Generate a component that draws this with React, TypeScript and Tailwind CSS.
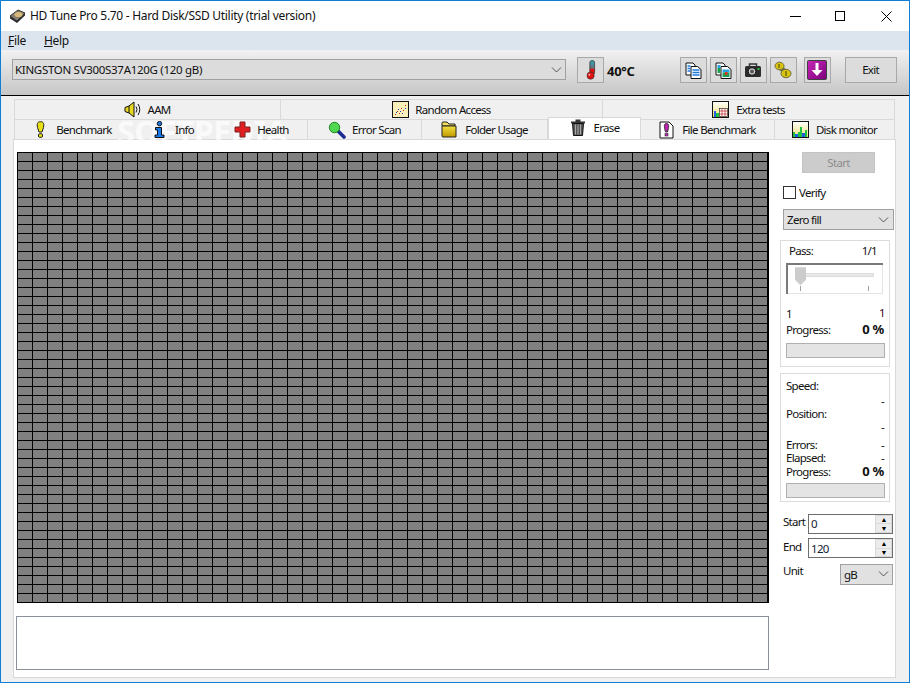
const font = "font-['Noto_Sans',sans-serif]";

function Chevron({ className = '' }: { className?: string }) {
  return (
    <svg className={className} width="11" height="6" viewBox="0 0 11 6" fill="none">
      <path d="M1 0.5 L5.5 5 L10 0.5" stroke="#555" strokeWidth="1" />
    </svg>
  );
}

function DiskLogo() {
  return (
    <svg width="17" height="15" viewBox="0 0 17 15">
      <path d="M1 7 L9 1 L16 4 L8 12 Z" fill="#857d70" stroke="#333" />
      <path d="M1 7 L1 9.5 L8 14 L16 6.5 L16 4 L8 12 Z" fill="#2e2e2e" />
      <ellipse cx="9.5" cy="5.5" rx="4" ry="2.6" fill="#d8b878" />
    </svg>
  );
}

function ThermoIcon() {
  return (
    <svg width="12" height="20" viewBox="0 0 14 25">
      <defs>
        <linearGradient id="tube" x1="0" y1="0" x2="0" y2="1">
          <stop offset="0" stopColor="#2fa8b8" />
          <stop offset="0.55" stopColor="#6a7074" />
          <stop offset="0.6" stopColor="#e01010" />
        </linearGradient>
      </defs>
      <rect x="5.5" y="0.5" width="6" height="18" rx="3" fill="url(#tube)" stroke="#222" strokeWidth="0.8" />
      <circle cx="6.5" cy="19.5" r="4.5" fill="#e01010" stroke="#333" strokeWidth="0.8" />
      <circle cx="5" cy="18.5" r="1.2" fill="#f8b0b0" />
    </svg>
  );
}

function DocsIcon({ variant }: { variant: 'text' | 'image' }) {
  return (
    <svg width="17" height="17" viewBox="0 0 17 17">
      <path d="M1 1 H8 L10 3 V13 H1 Z" fill="#fff" stroke="#111" />
      <path d="M6 4.5 H12.5 L16 7.5 V16.5 H6 Z" fill="#fff" stroke="#111" />
      {variant === 'text' ? (
        <path d="M2.5 4 H5.5 M2.5 6.5 H5.5 M2.5 9 H5.5 M7.5 8 H14.5 M7.5 10.5 H14.5 M7.5 13 H14.5" stroke="#1e78e0" strokeWidth="1.3" />
      ) : (
        <g>
          <rect x="2.5" y="3" width="3" height="3" fill="#29a0e0" />
          <rect x="2.5" y="6" width="3" height="5" fill="#1aa050" />
          <rect x="7.5" y="7.5" width="7" height="3" fill="#29a0e0" />
          <rect x="7.5" y="10.5" width="7" height="4.5" fill="#1aa050" />
          <rect x="10" y="10" width="2.5" height="3" fill="#e03020" />
        </g>
      )}
    </svg>
  );
}

function CameraIcon() {
  return (
    <svg width="18" height="15" viewBox="0 0 18 15">
      <path d="M5.5 3 V1 H12.5 V3" fill="none" stroke="#333" strokeWidth="1.5" />
      <rect x="1" y="3" width="16" height="11" rx="1.5" fill="#2c2c2c" />
      <circle cx="8" cy="8.5" r="3.8" fill="#d4d4d4" stroke="#111" />
      <circle cx="8" cy="8.5" r="2" fill="#555" />
      <rect x="13.5" y="5" width="2" height="2" fill="#20c040" />
    </svg>
  );
}

function CoinsIcon() {
  return (
    <svg width="18" height="18" viewBox="0 0 18 18">
      <path d="M6 6 L12 12" stroke="#6e6a40" strokeWidth="5" />
      <ellipse cx="5.5" cy="5" rx="4.5" ry="3.8" fill="#d8c410" stroke="#6e6a40" />
      <ellipse cx="12" cy="12.5" rx="5" ry="4.2" fill="#d8c410" stroke="#6e6a40" />
      <path d="M5 3 V7 M12 10 V15" stroke="#6b5e00" strokeWidth="1.3" />
    </svg>
  );
}

function DownloadIcon() {
  return (
    <svg width="20" height="20" viewBox="0 0 20 20">
      <defs>
        <linearGradient id="dl" x1="0" y1="0" x2="1" y2="1">
          <stop offset="0" stopColor="#c828b8" />
          <stop offset="1" stopColor="#7c007c" />
        </linearGradient>
      </defs>
      <rect x="0.5" y="0.5" width="19" height="19" rx="1" fill="url(#dl)" stroke="#404040" />
      <path d="M8.5 3 H11.5 V10 H15.5 L10 16 L4.5 10 H8.5 Z" fill="#fff" />
    </svg>
  );
}

function BulbIcon() {
  return (
    <svg width="11" height="17" viewBox="0 0 11 17">
      <path d="M5.5 0.7 C2 0.7 1.5 3.5 3 8 L4 11 H7 L8 8 C9.5 3.5 9 0.7 5.5 0.7 Z" fill="#e8e010" stroke="#222" />
      <rect x="3.5" y="12.7" width="4" height="3.6" rx="1.2" fill="#e8e010" stroke="#222" />
    </svg>
  );
}

function InfoIcon() {
  return (
    <svg width="11" height="17" viewBox="0 0 11 17">
      <circle cx="5.5" cy="2.6" r="2.2" fill="#1878e8" stroke="#111" />
      <path d="M1.5 6.5 H7.5 V14 H10 V16.5 H1 V14 H3.5 V9 H1.5 Z" fill="#1878e8" stroke="#111" />
    </svg>
  );
}

function CrossIcon() {
  return (
    <svg width="17" height="17" viewBox="0 0 17 17">
      <path d="M6 1 H11 V6 H16 V11 H11 V16 H6 V11 H1 V6 H6 Z" fill="#e02020" stroke="#7a2020" />
    </svg>
  );
}

function MagnifierIcon() {
  return (
    <svg width="18" height="18" viewBox="0 0 18 18">
      <path d="M9 9 L16 16" stroke="#1c2c90" strokeWidth="3.6" strokeLinecap="round" />
      <circle cx="6.5" cy="6.5" r="5.2" fill="#50d850" stroke="#208020" />
    </svg>
  );
}

function FolderIcon() {
  return (
    <svg width="16" height="17" viewBox="0 0 16 17">
      <defs>
        <linearGradient id="fold" x1="0" y1="0" x2="0" y2="1">
          <stop offset="0" stopColor="#f4e040" />
          <stop offset="1" stopColor="#c09800" />
        </linearGradient>
      </defs>
      <path d="M1 2 Q1 1 2 1 H6 L8 3 H14 V5 H1 Z" fill="#f0dc60" stroke="#222" />
      <path d="M1 5 H15 V16 H2 Q1 16 1 15 Z" fill="url(#fold)" stroke="#222" />
    </svg>
  );
}

function TrashIcon() {
  return (
    <svg width="16" height="17" viewBox="0 0 16 17">
      <path d="M1 2.5 H15 V4.5 H1 Z M5.5 0.5 H10.5 V2.5 H5.5 Z" fill="#333" />
      <path d="M2.5 4.5 H13.5 L12.5 16.5 H3.5 Z" fill="#555" stroke="#111" />
      <path d="M5.5 5.5 V15.5 M8 5.5 V15.5 M10.5 5.5 V15.5" stroke="#aaa" strokeWidth="1" />
    </svg>
  );
}

function AlertDocIcon() {
  return (
    <svg width="15" height="18" viewBox="0 0 15 18">
      <path d="M1 1 H10 L14 5 V17 H1 Z" fill="#fff" stroke="#111" />
      <path d="M7.5 2.5 C5 2.5 5 5 6 9 L6.5 11 H8.5 L9 9 C10 5 10 2.5 7.5 2.5 Z" fill="#c020b0" stroke="#333" />
      <rect x="6" y="12.5" width="3" height="2.5" fill="#c020b0" stroke="#333" strokeWidth="0.6" />
    </svg>
  );
}

function ChartIcon({ grid = false }: { grid?: boolean }) {
  const id = grid ? 'cg1' : 'cg2';
  return (
    <svg width="17" height="17" viewBox="0 0 17 17">
      <defs>
        <linearGradient id={id} x1="0" y1="0" x2="0" y2="1">
          <stop offset="0" stopColor="#fff" />
          <stop offset="1" stopColor="#f0e070" />
        </linearGradient>
      </defs>
      <rect x="0.5" y="0.5" width="16" height="16" fill={`url(#${id})`} stroke="#111" />
      {grid ? (
        <g>
          <rect x="2" y="10" width="2" height="6" fill="#2060e0" />
          <rect x="4" y="12" width="3" height="4" fill="#20c040" />
          <rect x="7.5" y="7.5" width="8" height="8" fill="#fff" stroke="#333" strokeWidth="0.7" />
          <path d="M7.5 10 H15.5 M7.5 13 H15.5 M10 7.5 V15.5 M13 7.5 V15.5" stroke="#c02020" strokeWidth="0.7" />
        </g>
      ) : (
        <g>
          <path d="M1 16 V11 H3 V16 Z M6 16 V11 H8 V16 Z M8 16 V6 H10 V16 Z M13 16 V9 H15 V16 Z" fill="#20c040" />
          <path d="M3 16 V13 H6 V16 Z M10 16 V12 H13 V16 Z" fill="#2060e0" />
        </g>
      )}
    </svg>
  );
}

function ScatterIcon() {
  return (
    <svg width="17" height="17" viewBox="0 0 17 17">
      <rect x="0.5" y="0.5" width="16" height="16" fill="#f8f0b8" stroke="#111" />
      <path d="M3 13h1v1H3z M5 10h1v1H5z M7 12h1v1H7z M9 7h1v1H9z M11 9h1v1h-1z M13 4h1v1h-1z" fill="#d02020" />
      <path d="M4 11h1v1H4z M6 8h1v1H6z M8 10h1v1H8z M10 12h1v1h-1z M13 7h1v1h-1z" fill="#2040d0" />
    </svg>
  );
}

function SpeakerIcon() {
  return (
    <svg width="17" height="17" viewBox="0 0 17 17">
      <path d="M1 6.5 L5 5 L10 1 V16 L5 12 L1 10.5 Z" fill="#e8d820" stroke="#111" />
      <path d="M5 5 V12" stroke="#111" />
      <path d="M12 5.5 Q14 8.5 12 11.5 M14 3 Q17.5 8.5 14 14" fill="none" stroke="#111" />
    </svg>
  );
}

function Tab({ icon, label, className = '', divider = true }: { icon: React.ReactNode; label: string; className?: string; divider?: boolean }) {
  return (
    <div className={`relative z-30 flex h-5 items-center justify-center border-t border-[#d9d9d9] first:border-l ${divider ? 'border-r' : ''} ${className}`}>
      {icon}
      <span>{label}</span>
    </div>
  );
}

function ToolButton({ children, className = '' }: { children: React.ReactNode; className?: string }) {
  return (
    <div className={`flex h-[26px] w-[27px] items-center justify-center border border-[#a8a8a8] bg-[#dcdcdc] ${className}`}>
      {children}
    </div>
  );
}

function Row({ left, right, className = '' }: { left: string; right?: React.ReactNode; className?: string }) {
  return (
    <div className={`flex justify-between leading-[13px] ${className}`}>
      <span>{left}</span>
      {right}
    </div>
  );
}

function Percent() {
  return <span className="text-[13px] font-bold tracking-[-0.3px]">0 %</span>;
}

function Spinner({ label, value }: { label: string; value: string }) {
  return (
    <div className="flex items-center">
      <span className="w-[25px] pb-1">{label}</span>
      <div className="flex h-5 w-[85px] items-center justify-between border border-[#6e6e6e] bg-white pl-[2px] text-[#123]">
        <span>{value}</span>
        <div className="flex h-full w-[17px] flex-col gap-px bg-[#d8d8d8] p-px">
          <div className="flex flex-1 items-center justify-center bg-[#ececec] text-[7px] leading-none text-black">▲</div>
          <div className="flex flex-1 items-center justify-center bg-[#ececec] text-[7px] leading-none text-black">▼</div>
        </div>
      </div>
    </div>
  );
}

export default function App() {
  const cells = Array.from({ length: 2500 });

  return (
    <div className={`${font} relative flex h-[683px] w-[910px] flex-col overflow-hidden border border-[#0f7fd6] bg-[#f0f0f0] text-[11.5px] text-[#111] tracking-[-0.7px]`}>
      {/* title bar */}
      <div className="flex h-[30px] shrink-0 items-center bg-white pl-[8px]">
        <DiskLogo />
        <span className="ml-[4px] text-[12px] tracking-[-0.3px]">HD Tune Pro 5.70 - Hard Disk/SSD Utility (trial version)</span>
        <div className="ml-auto flex items-center pr-[17px]">
          <div className="h-px w-[11px] bg-black" />
          <div className="ml-[34px] h-[10px] w-[10px] border border-black" />
          <svg className="ml-[36px]" width="11" height="11" viewBox="0 0 11 11">
            <path d="M0.5 0.5 L10.5 10.5 M10.5 0.5 L0.5 10.5" stroke="#000" />
          </svg>
        </div>
      </div>

      {/* menu */}
      <div className="flex h-[19px] shrink-0 items-center gap-[18px] bg-[#dce4ee] pl-[7px] text-[12px] tracking-[-0.3px]">
        <span><u>F</u>ile</span>
        <span><u>H</u>elp</span>
      </div>

      {/* toolbar */}
      <div className="flex h-[46px] shrink-0 items-start border-b border-black bg-gradient-to-b from-[#f1f1f1] to-[#c6c6c6] pl-[11px] pt-[7px]">
        <div className="mt-[2px] flex h-[21px] w-[554px] items-center justify-between border border-[#a0a0a0] bg-[#dcdcdc] pl-[2px] pr-[3px] tracking-[-0.3px]">
          <span>KINGSTON SV300S37A120G (120 gB)</span>
          <Chevron />
        </div>
        <ToolButton className="ml-[11px]"><ThermoIcon /></ToolButton>
        <span className="ml-[3px] mt-[5px] text-[13px] font-bold tracking-[-0.3px]">40°C</span>
        <div className="ml-[45px] flex gap-[3px]">
          <ToolButton><DocsIcon variant="text" /></ToolButton>
          <ToolButton><DocsIcon variant="image" /></ToolButton>
          <ToolButton><CameraIcon /></ToolButton>
          <ToolButton><CoinsIcon /></ToolButton>
        </div>
        <ToolButton className="ml-[7px]"><DownloadIcon /></ToolButton>
        <div className="ml-[14px] flex h-[26px] w-[52px] items-center justify-center border border-[#a8a8a8] bg-[#dcdcdc]">Exit</div>
      </div>

      {/* tabs */}
      <div className="ml-[13px] mt-[3px] w-[881px] shrink-0">
        <div className="flex">
          <Tab className="w-[267px] gap-[6px]" icon={<SpeakerIcon />} label="AAM" />
          <Tab className="w-[322px] gap-[6px]" icon={<ScatterIcon />} label="Random Access" />
          <Tab className="w-[292px] gap-[7px]" icon={<ChartIcon grid />} label="Extra tests" />
        </div>
        <div className="flex h-5 items-end">
          <Tab className="w-[118px] gap-[10px]" divider={false} icon={<BulbIcon />} label="Benchmark" />
          <Tab className="w-[84px] gap-[10px]" divider={false} icon={<InfoIcon />} label="Info" />
          <Tab className="w-[92px] gap-[6px]" icon={<CrossIcon />} label="Health" />
          <Tab className="w-[114px] gap-[6px]" icon={<MagnifierIcon />} label="Error Scan" />
          <Tab className="w-[126px] gap-[8px]" icon={<FolderIcon />} label="Folder Usage" />
          <div className="z-10 flex h-[22px] w-[93px] items-center justify-center gap-[8px] border-x border-t border-[#d9d9d9] bg-white pb-[2px]">
            <TrashIcon />
            <span>Erase</span>
          </div>
          <Tab className="w-[134px] gap-[8px]" icon={<AlertDocIcon />} label="File Benchmark" />
          <Tab className="w-[120px] gap-[7px]" icon={<ChartIcon />} label="Disk monitor" />
        </div>
      </div>

      {/* page */}
      <div className="ml-[12px] mr-[13px] flex min-h-0 flex-1 gap-[14px] border border-[#d9d9d9] bg-white pl-[3px] pt-[12px]">
        <div className="flex w-[752px] shrink-0 flex-col">
          <div className="grid w-[752px] grid-cols-[repeat(50,14px)] grid-rows-[repeat(50,8px)] gap-px border border-black bg-black">
            {cells.map((_, i) => (
              <div key={i} className="bg-[#808080]" />
            ))}
          </div>
          <div className="-ml-px mt-[13px] h-[54px] w-[753px] border border-[#8a919c] bg-white" />
        </div>

        <div className="flex w-[111px] shrink-0 flex-col">
          <div className="ml-[19px] flex h-[21px] w-[73px] items-center justify-center border border-[#c4c4c4] bg-[#cccccc] text-[#8c8c8c]">Start</div>
          <div className="mt-[11px] flex items-center gap-[3px]">
            <div className="h-[13px] w-[13px] border border-[#333] bg-white" />
            <span>Verify</span>
          </div>
          <div className="mt-[8px] flex h-[21px] w-[111px] items-center justify-between border border-[#a0a0a0] bg-[#e1e1e1] pl-[3px] pr-[4px]">
            <span>Zero fill</span>
            <Chevron />
          </div>

          <div className="mt-[10px] h-[127px] w-[110px] -translate-x-[3px] border border-[#dcdcdc] px-[5px] pt-[2px]">
            <div className="flex justify-between pl-[3px] pr-[7px] leading-[15px]">
              <span>Pass:</span>
              <span>1/1</span>
            </div>
            <div className="relative mt-[5px] h-[31px] w-[97px] border-l-2 border-t-2 border-[#7a7a7a] shadow-[inset_-1px_-1px_0_#e4e4e4]">
              <div className="ml-[8px] mt-[8px] h-[4px] w-[78px] border border-[#dcdcdc] bg-[#e8e8e8]" />
              <div className="absolute left-[7px] top-[2px] h-[18px] w-[11px] bg-[#cccccc] [clip-path:polygon(0_0,100%_0,100%_70%,50%_100%,0_70%)]" />
              <div className="absolute left-[12px] top-[21px] h-[5px] w-px bg-[#a0a0a0]" />
              <div className="absolute left-[80px] top-[21px] h-[5px] w-px bg-[#a0a0a0]" />
            </div>
            <div className="mt-[11px] flex justify-between leading-[14px]">
              <span className="mt-[2px]">1</span>
              <span className="-mr-[1px] mt-px text-[#400020]">1</span>
            </div>
            <Row className="mt-[2px]" left="Progress:" right={<Percent />} />
            <div className="mt-[7px] h-[15px] w-[99px] border border-[#b0b0b0] bg-[#e4e4e4]" />
          </div>

          <div className="mt-[6px] h-[129px] w-[110px] -translate-x-[3px] border border-[#dcdcdc] px-[5px] pt-[5px]">
            <Row left="Speed:" />
            <div className="mt-[2px] text-right leading-[13px]">-</div>
            <Row left="Position:" />
            <div className="text-right leading-[13px]">-</div>
            <Row className="mt-[5px]" left="Errors:" right={<span>-</span>} />
            <Row left="Elapsed:" right={<span>-</span>} />
            <Row className="mt-px" left="Progress:" right={<Percent />} />
            <div className="mt-[5px] h-[15px] w-[99px] border border-[#b0b0b0] bg-[#e4e4e4]" />
          </div>

          <div className="mt-[11px] flex flex-col gap-[3px]">
            <Spinner label="Start" value="0" />
            <Spinner label="End" value="120" />
          </div>
          <div className="mt-[5px] flex items-start justify-between pr-px">
            <span className="-mt-[2px]">Unit</span>
            <div className="flex h-[21px] w-[53px] items-center justify-between border border-[#a0a0a0] bg-[#e1e1e1] pl-[3px] pr-[3px]">
              <span>gB</span>
              <Chevron />
            </div>
          </div>
        </div>
      </div>
      <div className="h-[4px] shrink-0" />

      {/* watermark, sits under the tab labels */}
      <div className="pointer-events-none absolute left-[116px] top-[116px] z-20 text-[32px] leading-[30px] font-bold tracking-[-0.5px] text-white/70">SOFTPEDIA</div>
    </div>
  );
}
